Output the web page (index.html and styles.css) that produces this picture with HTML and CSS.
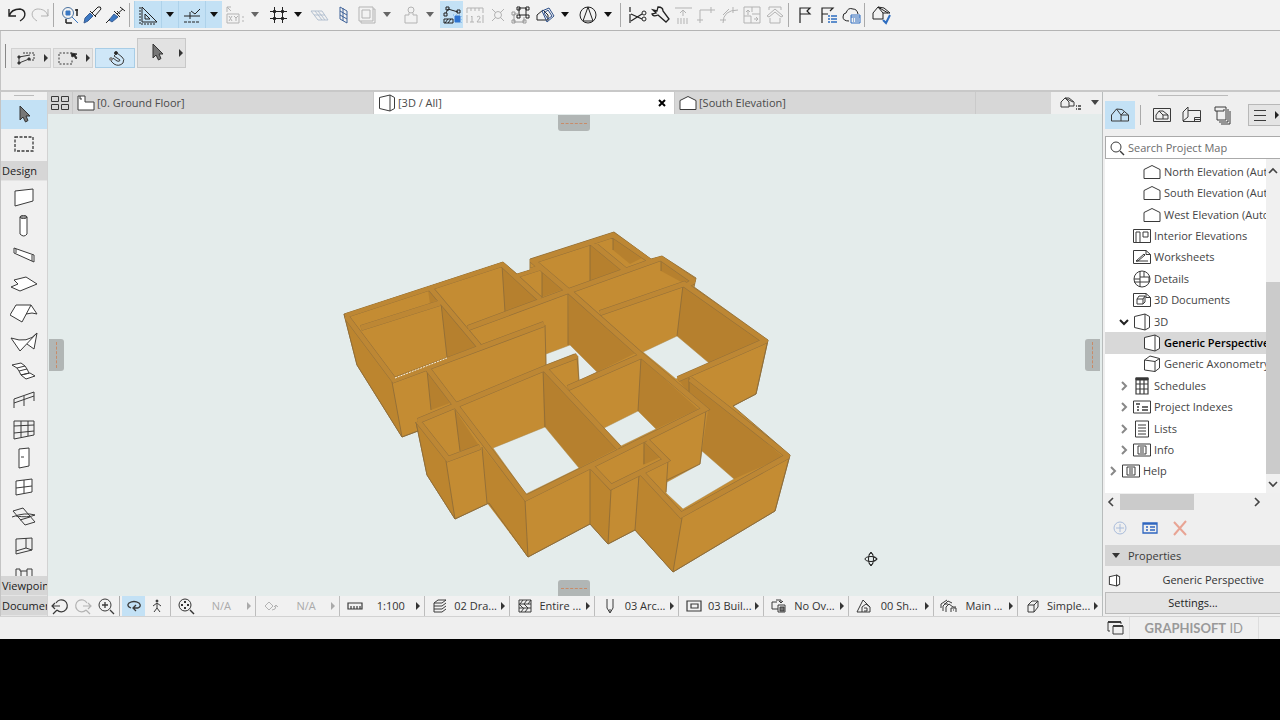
FILE: index.html
```
<!DOCTYPE html>
<html lang="en">
<head>
<meta charset="utf-8">
<title>Project - 3D / All</title>
<link rel="stylesheet" href="styles.css">
</head>
<body>
<svg class="defs" aria-hidden="true">
  <symbol id="caret" viewBox="0 0 10 6"><path d="M1 0h8L5 5z" fill="currentColor" stroke="none"/></symbol>
  <symbol id="play" viewBox="0 0 6 8"><path d="M1 0l4 4-4 4z" fill="currentColor" stroke="none"/></symbol>
  <symbol id="pointer" viewBox="-11 -11 22 22"><path d="M-4-9V5l3-3 2.500 5 2.500-1.500L2 1h4z" fill="#777" stroke="#333"/></symbol>
  <symbol id="elev" viewBox="-11 -11 22 22"><path d="M-8 6.500V-2.500L0-6.500 8-2.500V6.500z" fill="#fff"/></symbol>
  <symbol id="persp" viewBox="-11 -11 22 22"><path d="M-7.500-5.500L3-8V8L-7.500 5.500zM3-8l4.500 2.500v11L3 8" fill="#fff"/></symbol>
  <symbol id="house" viewBox="-11 -11 22 22"><path d="M-8.500 6V0l5-6L1 0v6zM-3.500-6L2-5.500 8.500 0M1 0h7.500v6H1M1 0l3-3"/></symbol>
  <symbol id="infobox" viewBox="-11 -11 22 22"><path d="M-8.500-6h17V6h-17zM-4-4h8v8h-8zM-2-2h4M-2 0h4M-2 2h4"/></symbol>
  <symbol id="chev" viewBox="0 0 10 10"><path d="M3 1l4 4-4 4" stroke-width="2"/></symbol>
</svg>

<div class="app">
  <header class="toolbar" role="toolbar" aria-label="Standard">
    <button class="tb" aria-label="Undo"><svg class="i" viewBox="-11 -11 22 22"><path d="M-8-6v7h7M-8 1C-6-5-2-6 3-6 9-5 10 2 3 6" stroke-width="1.400"/></svg></button>
    <button class="tb dim" aria-label="Redo"><svg class="i" viewBox="-11 -11 22 22"><path d="M8-6v7H1M8 1C6-5 2-6-3-6-9-5-10 2-3 6"/></svg></button>
    <span class="sep"></span>
    <button class="tb" aria-label="Find and select"><svg class="i" viewBox="-11 -11 22 22"><circle cx="-2" cy="-2" r="5.500" stroke="#49719f"/><path d="M-4-4h4v4h-4z" fill="#3b78c3" stroke="#3b78c3"/><path d="M2 2l6 6" stroke="#3b78c3"/><path d="M5-5h3M7-6v7M-4 8h6M-4 4v4" stroke-width="1.500"/></svg></button>
    <button class="tb" aria-label="Pick up parameters"><svg class="i" viewBox="-11 -11 22 22"><path d="M-9 8l1-5 5-5 3 3-5 5z" fill="#3b78c3" stroke="#3b5f94"/><path d="M-3-4l6 6M-1-2l6-6q3-1 3 2L2 1"/></svg></button>
    <button class="tb" aria-label="Inject parameters"><svg class="i" viewBox="-11 -11 22 22"><path d="M-7 5l5-6 4 3-6 5z" fill="#3b78c3" stroke="#3b5f94"/><path d="M-10 8l4-4M-2-4l6 6M1-1l6-5M4-8l5 4M1-4l3 3"/></svg></button>
    <span class="sep"></span>
    <span class="toggles">
      <button class="tb on" aria-label="Guide lines"><svg class="i" viewBox="-11 -11 22 22"><path d="M-6-8L9 7H-6zM-3-1l5 5h-5z"/><path d="M-8-8V9H8" stroke-dasharray="2 1"/></svg></button><button class="car on" aria-label="Guide line options"><svg class="c"><use href="#caret"/></svg></button><button class="tb on" aria-label="Snap guides"><svg class="i" viewBox="-11 -11 22 22"><path d="M-8 1H8M-2-3v7M-1-4l4 3 5-5"/><path d="M-8 7H7" stroke-dasharray="3 1"/></svg></button><button class="car on" aria-label="Snap guide options"><svg class="c"><use href="#caret"/></svg></button>
    </span>
    <span class="split"><button class="tb dim" aria-label="Coordinates"><svg class="i" viewBox="-11 -11 22 22"><path d="M-8-1H4V8H-8zM-8-3v-5h4M-8-8l4 4M-6 1l3 5M-3 1l-3 5M-1 1l2 2 2-2M1 3v3M7 2h2M7 6h2"/></svg></button><button class="car mid" aria-label="Coordinate options"><svg class="c"><use href="#caret"/></svg></button></span>
    <span class="split"><button class="tb" aria-label="Grid snap"><svg class="i" viewBox="-11 -11 22 22"><path d="M-8-3.500H9M-8 3.500H9M-3.500-8V8M4.500-8V8"/><path d="M-4.500-4.500h2v2h-2zM3.500-4.500h2v2h-2zM-4.500 2.500h2v2h-2zM3.500 2.500h2v2h-2z" fill="#222"/></svg></button><button class="car" aria-label="Grid options"><svg class="c"><use href="#caret"/></svg></button></span>
    <button class="tb pale" aria-label="Skewed grid"><svg class="i" viewBox="-11 -11 22 22"><path d="M-9-4H2L8 5H-2zM-6 0H5M-5-4l7 9M-2-4l7 9"/></svg></button>
    <button class="tb blue" aria-label="Editing plane"><svg class="i" viewBox="-11 -11 22 22"><path d="M-3-8L4-4V8L-3 4zM0-7V6M-3-4l7 4M-3 0l7 4"/></svg></button>
    <span class="split"><button class="tb dim" aria-label="Layers"><svg class="i" viewBox="-11 -11 22 22"><path d="M-8-8H6V6H-8zM-5-5h8v8h-8zM6-6h2V8H-6V6"/></svg></button><button class="car mid" aria-label="Layer options"><svg class="c"><use href="#caret"/></svg></button></span>
    <span class="split"><button class="tb dim" aria-label="Gravity"><svg class="i" viewBox="-11 -11 22 22"><circle cx="1" cy="-5" r="3"/><path d="M-1-2v2h-4V8H7V0H3v-2"/></svg></button><button class="car mid" aria-label="Gravity options"><svg class="c"><use href="#caret"/></svg></button></span>
    <button class="tb on" aria-label="Suspend groups"><svg class="i" viewBox="-11 -11 22 22"><path d="M-6-2L-4-6 6-3M-8-2h3v3h-3zM-6-8h3v3h-3zM5-5h3v3H5zM-8 4h9v4h-9zM-7 8l3-4M-4 8l3-4"/><path d="M3 1h5v6H3z" fill="#2e74d0" stroke="#2e74d0"/><path d="M1 0H9V8" stroke="#6aa7e8" stroke-dasharray="1 2"/></svg></button>
    <button class="tb dim" aria-label="Ruler"><svg class="i" viewBox="-11 -11 22 22"><path d="M-8-2v-5H8v5M-4-7v3M0-7v3M4-7v3M-4 2l1-1v6M-5 7h4M2 2q3-2 3 1L2 7h4M-8 0V8M8 0V8"/></svg></button>
    <button class="tb dim" aria-label="Intersection"><svg class="i" viewBox="-11 -11 22 22"><circle r="3.500"/><path d="M-6-6l4 4M6-6L2-2M-6 6l4-4M6 6L2 2"/></svg></button>
    <button class="tb grey" aria-label="Group"><svg class="i" viewBox="-11 -11 22 22"><path d="M-2-7h7v7h-7zM-4-8h3v3h-3zM5-8h3v3H5zM-4 0h3v3h-3zM5 0h3v3H5z" stroke="#222"/><path d="M-2-1h-5v8H3V2M-9-3h3v3h-3zM-9 5h3v3h-3zM2 5h3v3H2z"/></svg></button>
    <span class="split"><button class="tb" aria-label="Trace"><svg class="i" viewBox="-11 -11 22 22"><path d="M-8 5v-5l6-5 5 5v5z"/><path d="M-3-4l7-3 5 8-7 6zM-1-2l4-3 4 6-4 3z" stroke="#2c4e88"/></svg></button><button class="car" aria-label="Trace options"><svg class="c"><use href="#caret"/></svg></button></span>
    <span class="split"><button class="tb" aria-label="North"><svg class="i" viewBox="-11 -11 22 22"><circle r="8"/><path d="M0-8l5 14H-5z"/></svg></button><button class="car" aria-label="North options"><svg class="c"><use href="#caret"/></svg></button></span>
    <span class="sep"></span>
    <button class="tb" aria-label="Split"><svg class="i" viewBox="-11 -11 22 22"><path d="M-7-8v5M-7-1V8M-6-1L5 4M-6 6L5-1" stroke-width="1.200"/><circle cx="7" cy="-2" r="2"/><circle cx="7" cy="4" r="2"/></svg></button>
    <button class="tb" aria-label="Adjust"><svg class="i" viewBox="-11 -11 22 22"><path d="M-7-5l4 1 1-4q5 0 5 4l6 8-3 3-8-7q-5 2-6-1l4-1z" stroke-width="1.300"/></svg></button>
    <button class="tb dim" aria-label="Elevate"><svg class="i" viewBox="-11 -11 22 22"><path d="M-8-7H9M0-5V1M-3-2l3-3 3 3M-5 3v6M-2 3v6M1 3v6M4 3v6"/></svg></button>
    <button class="tb dim" aria-label="Intersect"><svg class="i" viewBox="-11 -11 22 22"><path d="M-6 8V-5H9M-9 5h6M5-8v6"/></svg></button>
    <button class="tb dim" aria-label="Fillet"><svg class="i" viewBox="-11 -11 22 22"><path d="M-6 8Q-6-5 9-5M-9 5h6M4-8v6M-6 0l6-6"/></svg></button>
    <button class="tb dim" aria-label="Resize"><svg class="i" viewBox="-11 -11 22 22"><path d="M-8-8H8V8H-8zM-8 1h7v7M-4-5V0M-6-3l2-2 2 2M0-8v5M0-1h8M2 4h4M4 2l2 2-2 2"/></svg></button>
    <button class="tb dim" aria-label="Roof trim"><svg class="i" viewBox="-11 -11 22 22"><path d="M-8 1L0-6 8 1l-2 1-6-5-6 5zM-5 3v5H5V3M-6-5v-3H6v3"/></svg></button>
    <span class="sep"></span>
    <button class="tb" aria-label="Issue flag"><svg class="i" viewBox="-11 -11 22 22"><path d="M-5 8V-7H5L2-4l3 3H-5" stroke-width="1.200"/></svg></button>
    <button class="tb" aria-label="Issue list"><svg class="i" viewBox="-11 -11 22 22"><path d="M-6 8V-7H5L2-4M-6-1h6" stroke-width="1.200"/><path d="M0 1h2M0 4h2M0 7h2M3 1h6M3 4h6M3 7h6" stroke="#2e6dc0" stroke-width="1.600"/></svg></button>
    <button class="tb" aria-label="Cloud issues"><svg class="i" viewBox="-11 -11 22 22"><path d="M-2 6q-6 0-6-4 0-4 3-4 2-6 7-4 4 0 5 5"/><path d="M0 0h9v8H0zM0 2h9M2 4h1M2 6h1M4 4h4M4 6h4" stroke="#2e6dc0"/></svg></button>
    <span class="sep"></span>
    <button class="tb" aria-label="Model check"><svg class="i" viewBox="-11 -11 22 22"><path d="M-8 4v-6l5-6 5 6v6zM-3-8l6 1 6 5-7 0M-3-8l10 6"/><path d="M2 5l3 3 4-8" stroke="#2e6dc0" stroke-width="2"/></svg></button>
  </header>

  <section class="infobar" aria-label="Info box">
    <span class="grip"></span>
    <button class="opt" aria-label="Selection method"><svg class="i" viewBox="-11 -11 22 22"><path d="M-7-1L4-3M-7-1V5L3 1" /><path d="M-8-2h2v2h-2zM-8 4h2v2h-2zM2 0h2v2H2z" fill="#222"/><path d="M-3-5H8V2H4" stroke-dasharray="2 1"/></svg><svg class="p"><use href="#play"/></svg></button>
    <button class="opt" aria-label="Marquee method"><svg class="i" viewBox="-11 -11 22 22"><path d="M4-5H-9V6H4V2" stroke-dasharray="2 1.500"/><path d="M3-5l6 1-2 1 2 3-1 1-2-3-2 1z" fill="#222"/></svg><svg class="p"><use href="#play"/></svg></button>
    <button class="opt on" aria-label="Magnet"><svg class="i" viewBox="-11 -11 22 22"><path d="M-5 3l3 3q5 3 9-1 2-4-1-6L1-5-2-2 4 2q0 2-3 1L-3 0z"/><circle cx="-5" cy="1" r="1.500" fill="#888" stroke="#888"/><circle cx="0" cy="-5" r="1.500" fill="#222"/></svg></button>
    <button class="opt big" aria-label="Arrow tool"><svg class="i"><use href="#pointer"/></svg><svg class="p"><use href="#play"/></svg></button>
  </section>

  <div class="workspace">
    <nav class="toolbox" aria-label="Toolbox">
      <span class="hgrip"></span>
      <button class="tool on" aria-label="Arrow"><svg class="i"><use href="#pointer"/></svg></button>
      <button class="tool" aria-label="Marquee"><svg class="i" viewBox="-11 -11 22 22"><path d="M-9-7H9V7H-9z" stroke-dasharray="3 1.500" stroke-width="1.300"/></svg></button>
      <button class="group first">Design</button>
      <div class="tools">
        <button class="tool" aria-label="Wall"><svg class="i" viewBox="-11 -11 22 22"><path d="M-9-6L9-8V4L-9 9z" fill="#fff"/></svg></button>
        <button class="tool" aria-label="Column"><svg class="i" viewBox="-11 -11 22 22"><path d="M-4-9V8q4 4 7 0V-9z" fill="#fff"/><ellipse cx="-.5" cy="-9" rx="3.500" ry="1.500"/></svg></button>
        <button class="tool" aria-label="Beam"><svg class="i" viewBox="-11 -11 22 22"><path d="M-10-7L10 0V7L-10-2zM-8-6v4M8 0v6" fill="#fff"/></svg></button>
        <button class="tool wide" aria-label="Slab"><svg class="i" viewBox="-14 -11 28 22"><path d="M-10-4L2-7 13 0-4 7-13 3-6 0z" fill="#fff"/></svg></button>
        <button class="tool wide" aria-label="Roof"><svg class="i" viewBox="-14 -11 28 22"><path d="M-8-8H7L-2 9-14 2zM7-8l6 9-5-1-6 1" fill="#fff"/></svg></button>
        <button class="tool wide" aria-label="Shell"><svg class="i" viewBox="-14 -11 28 22"><path d="M-13-4Q4 2 13-9L-4 9zM13-9l-3 16-7-5" fill="#fff"/></svg></button>
        <button class="tool wide" aria-label="Stair"><svg class="i" viewBox="-14 -11 28 22"><path d="M-12-6l9-2 4 3-8 2zM-7-3l2 3 8-2-2-3M-5 0l2 4 8-2-2-4M-3 4L2 8 11 5 6 2z" fill="#fff"/></svg></button>
        <button class="tool" aria-label="Railing"><svg class="i" viewBox="-11 -11 22 22"><path d="M-10 8V-1L10-8V1M-10 3L10-4M0-4V6"/></svg></button>
        <button class="tool" aria-label="Curtain wall"><svg class="i" viewBox="-11 -11 22 22"><path d="M-10-8H10V6L-10 10zM-3-8V8M4-8V7M-10-3L10-4M-10 4L10 2"/></svg></button>
        <button class="tool" aria-label="Door"><svg class="i" viewBox="-11 -11 22 22"><path d="M-5-9L5-10V8L-5 10zM-3-1h3" fill="#fff"/></svg></button>
        <button class="tool" aria-label="Window"><svg class="i" viewBox="-11 -11 22 22"><path d="M-8-6L8-8V5L-8 8zM0-7V6M-8 1L8-1" fill="#fff"/></svg></button>
        <button class="tool wide" aria-label="Skylight"><svg class="i" viewBox="-14 -11 28 22"><path d="M-11-5L-1-8 11 6 1 9zM-12 1Q1-4 11-1M-8 0Q4 2 11-1M-4 4l10-3"/></svg></button>
        <button class="tool" aria-label="Opening"><svg class="i" viewBox="-11 -11 22 22"><path d="M-8-6L8-7V5L-8 9zM2-7V3l6 2M2 3L-8 6"/></svg></button>
        <button class="tool" aria-label="Object"><svg class="i" viewBox="-11 -11 22 22"><path d="M-8 9V-5h4v2h7v-2h5V9M-3-3V9M3-3V9"/></svg></button>
      </div>
      <button class="group">Viewpoint</button>
      <button class="group">Document</button>
    </nav>

    <main class="center">
      <div class="tabs" role="tablist">
        <button class="overview" aria-label="Tab overview"><svg class="i" viewBox="-11 -11 22 22"><path d="M-8.500-6.500h7v5h-7zM1.500-6.500h7v5h-7zM-8.500 1.500h7v5h-7zM1.500 1.500h7v5h-7z"/></svg></button>
        <button class="tab" role="tab"><svg class="i" viewBox="-11 -11 22 22"><path d="M-8-7h7v6h9v8H-8zM-6-7v3h2" fill="#fff"/></svg>[0. Ground Floor]</button>
        <div class="tab active"><button role="tab"><svg class="i"><use href="#persp"/></svg>[3D / All]</button><button class="close" aria-label="Close tab"><svg viewBox="0 0 8 8"><path d="M1 1l6 6M7 1L1 7" stroke-width="2"/></svg></button></div>
        <button class="tab" role="tab"><svg class="i"><use href="#elev"/></svg>[South Elevation]</button>
        <span class="rest"></span>
        <button class="viewmenu" aria-label="View options"><svg class="i" viewBox="-11 -11 22 22"><path d="M-10 4v-5l4-4 4 4v5zM-6-5h4l5 4v4h-5M-6-5l8 4"/><path d="M5 3h1M7 3h3M5 6h1M7 6h3" stroke-width="1.500"/></svg><svg class="c"><use href="#caret"/></svg></button>
      </div>

      <div class="viewport">
        <svg class="scene" viewBox="48 114 1054 482" role="img" aria-label="3D model of ground floor walls">
          <defs>
            <path id="mass" d="M344 314L503 262 517 274 530 270V259L614 232 651 259 662 256 696 278 694 287 768 340 756 394 733 406 790 455 775 511 673 572 635 530 608 544 590 524 528 557 489 503 455 519 427 475 416 422 418 431 402 437 357 365z"/>
            <clipPath id="within"><use href="#mass"/></clipPath>
          </defs>
          <use class="lit" href="#mass"/>
          <g class="shade">
            <path d="M441 303L477 346 447 357z"/><path d="M428 290L437 300 430 304z"/><path d="M502 265L538 300 505 312z"/><path d="M542 268L564 289 542 297z"/>
            <path d="M590 241L624 270 590 283z"/><path d="M613 235L642 258 630 264 613 250z"/><path d="M661 258L694 281 685 284 661 271z"/>
            <path d="M569 292L638 352 597 372 568 345z"/><path d="M683 284L763 342 709 363 677 336z"/>
            <path d="M427 370L450 403 431 410z"/><path d="M455 410L480 447 460 451z"/><path d="M543 370L618 448 579 468 544 427z"/>
            <path d="M641 358L698 409 656 429 638 411z"/><path d="M689 378L783 457 734 479 702 451 708 410 689 394z"/>
            <path d="M644 442L661 457 643 465z"/><path d="M678 379L690 377 689 394z"/>
          </g>
          <g class="side">
            <path d="M344 314L357 365 402 437 392 382z"/><path d="M416 422L427 475 455 519 446 461z"/><path d="M482 447L525 500 528 557 487 503z"/>
            <path d="M590 470L611 490 609 544 590 523z"/><path d="M639 473L682 518 673 572 635 530z"/>
          </g>
          <g class="open">
            <path d="M493 448L545 427 579 468 526 494z"/><path d="M604 428L638 411 656 429 621 446z"/><path d="M643 352L677 336 709 363 676 379z"/>
            <path d="M546 354L570 345 597 372 579 381 578 356 574 354 546 365z"/><path d="M702 451L734 479 683 509 666 493 667 482 700 464z"/>
          </g>
          <g class="edge">
            <path d="M344 314L357 365 402 437M392 382L402 437 418 431M416 422L427 475 455 519 446 461M455 519L489 503 528 557 525 500M528 557L590 524 608 544 611 490M608 544L635 530 673 572 682 518M673 572L775 511 790 455M768 340L756 394 733 406M639 475L635 530M590 470V524M482 447L487 503M545 325L546 365M577 357L579 381M706 410L700 464 667 480M668 460L666 492M641 358L638 411M543 370L545 427M568 292V345M683 285L677 336M441 303L447 357M502 265L505 312M542 268V297M590 241V283M613 235V250M661 258V271M427 370L431 410M455 410L460 451M644 442V464M689 378V394"/>
          </g>
          <g clip-path="url(#within)">
            <g class="cap-edge"><use href="#caps"/></g>
            <g class="cap"><path id="caps" d="M346 316L394 380 544 324M346 315L502 264 540 299M431 289L479 346M361 328L440 303M468 328L568 291 533 261 613 235 651 261M517 275L542 267M591 242L625 270M569 291L661 258 694 281 686 286M600 313L684 284 765 341 678 379M569 291L641 355 705 409 526 498 428 369M418 421L543 369 577 356M545 369L619 448M568 388L641 356M418 421L448 459 480 447M592 467L611 487 666 460 647 441M641 472L681 515 788 456 690 379"/></g>
          </g>
          <path d="M395 378L447 358" stroke="#f4f1e4" stroke-dasharray="2 1"/>
          <g class="cursor"><ellipse cx="871" cy="559" rx="6" ry="2.500"/><ellipse cx="871" cy="559" rx="2.500" ry="6"/><path d="M869 555l2-3 2 3M869 563l2 3 2-3M874 557l3 2-3 2"/></g>
        </svg>
        <button class="handle top" aria-label="Expand top"></button>
        <button class="handle bottom" aria-label="Expand bottom"></button>
        <button class="handle left" aria-label="Expand left"></button>
        <button class="handle right" aria-label="Expand right"></button>
      </div>

      <div class="quickbar" role="toolbar" aria-label="Quick options">
        <div class="nav">
          <button aria-label="Previous view"><svg class="i" viewBox="-11 -11 22 22"><path d="M-4-3a6 6 0 1 1 1 7M-8 0h8M-5-3l-3 3 3 3M-3 4l-4 4" stroke-width="1.200"/></svg></button>
          <button class="dim" aria-label="Next view"><svg class="i" viewBox="-11 -11 22 22"><path d="M4-3a6 6 0 1 0-1 7M8 0H0M5-3l3 3-3 3M3 4l4 4" stroke-width="1.200"/></svg></button>
          <button aria-label="Zoom in"><svg class="i" viewBox="-11 -11 22 22"><circle cx="-1" cy="-1" r="6"/><path d="M-4-1h6M-1-4v6M4 4l4 4" stroke-width="1.300"/></svg></button>
          <span class="sep"></span>
          <button class="on" aria-label="Orbit"><svg class="i" viewBox="-11 -11 22 22"><path d="M-3 2Q-8 0-5-3 0-6 5-3 8 0 4 2L-1 2M2-1l-3 3 3 3" stroke-width="1.300"/></svg></button>
          <button aria-label="Walk"><svg class="i" viewBox="-11 -11 22 22"><circle cx="0" cy="-5" r="1" fill="#222"/><path d="M0-3V2l3 4M0 2l-3 4M-4 0l4-3 4 3"/></svg></button>
        </div>
        <button class="q dim"><svg class="i dark" viewBox="-11 -11 22 22"><circle cx="-1" cy="-1" r="6"/><path d="M-2-5h2v2h-2zM-2 1h2v2h-2zM-5-2h2v2h-2zM1-2h2v2H1z" fill="#333" stroke="none"/><path d="M4 4l4 4" stroke-width="1.400"/></svg><span>N/A</span><svg class="p"><use href="#play"/></svg></button>
        <button class="q dim"><svg class="i" viewBox="-11 -11 22 22"><path d="M-6 0l4-4 4 4-4 4zM1 4q4 0 4-4M3 1l2-2 2 2"/></svg><span>N/A</span><svg class="p"><use href="#play"/></svg></button>
        <button class="q"><svg class="i" viewBox="-11 -11 22 22"><path d="M-7-3H7V3H-7zM-4 3V0M-1 3V0M2 3V0M5 3V0" stroke-width="1.200"/></svg><span>1:100</span><svg class="p"><use href="#play"/></svg></button>
        <button class="q"><svg class="i" viewBox="-11 -11 22 22"><path d="M-2-6h8L2-3h-8zM-6 0h8l4-3M-6 3h8l4-3M-6 6h8l4-3M-6-3v9"/></svg><span>02 Dra...</span><svg class="p"><use href="#play"/></svg></button>
        <button class="q"><svg class="i" viewBox="-11 -11 22 22"><path d="M-6-6H6V6H-6zM-6-2H6M-6 2H6M-5-2l3-4M-1-2l3-4M3-2l3-4M-6-2l4 4M-1-2l4 4M-4 6l3-4M0 6l3-4"/></svg><span>Entire ...</span><svg class="p"><use href="#play"/></svg></button>
        <button class="q"><svg class="i" viewBox="-11 -11 22 22"><path d="M-3-7V2L0 7 3 2V-7M0 3v3"/></svg><span>03 Arc...</span><svg class="p"><use href="#play"/></svg></button>
        <button class="q"><svg class="i" viewBox="-11 -11 22 22"><path d="M-7-5H7V5H-7zM-3-2h7v4h-7z" stroke-width="1.200"/></svg><span>03 Buil...</span><svg class="p"><use href="#play"/></svg></button>
        <button class="q"><svg class="i" viewBox="-11 -11 22 22"><path d="M-1 3h-6v-7h5M-3-6h5v3M0-5l2 2 2-2M-1-1h7v7h-7z"/><path d="M1 1h4v4H1z" fill="#777"/></svg><span>No Ov...</span><svg class="p"><use href="#play"/></svg></button>
        <button class="q"><svg class="i" viewBox="-11 -11 22 22"><path d="M-7 6L-1-6 6 1M-7 6H6V1L2-2-2 1v5M0 2h3v3H0"/></svg><span>00 Sh...</span><svg class="p"><use href="#play"/></svg></button>
        <button class="q"><svg class="i" viewBox="-11 -11 22 22"><path d="M-6 5V0l5-5 4 2M-8 2v-4l6-4M-3 6V1l3-3 4 3h3M2 6V2h5v4M4 4h1M-5-2h4"/></svg><span>Main ...</span><svg class="p"><use href="#play"/></svg></button>
        <button class="q"><svg class="i" viewBox="-11 -11 22 22"><path d="M-5-1l4-4h6v6l-4 5h-6zM-5-1h6v7M1-1l4-4"/></svg><span>Simple...</span><svg class="p"><use href="#play"/></svg></button>
      </div>
    </main>

    <aside class="navigator">
      <span class="hgrip"></span>
      <div class="maps">
        <button class="map on" aria-label="Project map"><svg class="i"><use href="#house"/></svg></button>
        <span class="sep"></span>
        <button class="map" aria-label="View map"><svg class="i" viewBox="-11 -11 22 22"><path d="M-8.500-6.500h17v13h-17zM-6 4V0l3-4 4 4v4zM-3-4h4l5 4v4H1M1 0h5"/></svg></button>
        <button class="map" aria-label="Layout book"><svg class="i" viewBox="-11 -11 22 22"><path d="M-9-3l5-5V2l-5 4zM-4-4.500H8.500v11H-9M2.500 6.500v-4h6M2.500 4.500h6"/></svg></button>
        <button class="map" aria-label="Publisher sets"><svg class="i" viewBox="-11 -11 22 22"><path d="M-5-4V5H4V-8H-7v4H2V-6M6-6V7H-3M8-4V9H-1"/></svg></button>
        <button class="menu" aria-label="Navigator menu"><svg viewBox="0 0 30 12"><path d="M4 1.500h12M4 6.500h12M4 11.500h12"/><path d="M25 2l4 4-4 4z" fill="#222" stroke="none"/></svg></button>
      </div>
      <label class="search"><svg class="i" viewBox="-11 -11 22 22"><circle cx="-1" cy="-1" r="5"/><path d="M3 3l4 4" stroke-width="1.400"/></svg><input type="text" placeholder="Search Project Map" aria-label="Search Project Map"></label>
      <div class="treebox">
        <ul class="tree">
          <li class="l3"><svg class="i"><use href="#elev"/></svg>North Elevation (Auto-rebuild)</li>
          <li class="l3"><svg class="i"><use href="#elev"/></svg>South Elevation (Auto-rebuild)</li>
          <li class="l3"><svg class="i"><use href="#elev"/></svg>West Elevation (Auto-rebuild)</li>
          <li class="l2"><svg class="i" viewBox="-11 -11 22 22"><path d="M-8.500-6.500h17v13h-17zM-6 6.500V-4h4V6.500M1-4h5v5H1z"/></svg>Interior Elevations</li>
          <li class="l2"><svg class="i" viewBox="-11 -11 22 22"><path d="M-8.500-6.500H4l4.500 4v9h-17zM4-6.500v4h4.500M-6 4l8-7 1 1-7 6zM-6 4H6"/></svg>Worksheets</li>
          <li class="l2"><svg class="i" viewBox="-11 -11 22 22"><circle r="8"/><path d="M-2-8V8M-8 0h6M-2-2h9v5h-9M2-7v5M-8 3h6"/></svg>Details</li>
          <li class="l2"><svg class="i" viewBox="-11 -11 22 22"><path d="M-8.500-6.500H4l4.500 4v9h-17zM4-6.500v4h4.500M-5-1l2-3h6v6L1 4h-6zM-5-1h6v5M1-1l2-3"/></svg>3D Documents</li>
          <li class="l2"><svg class="v open-v" viewBox="0 0 10 10"><path d="M1 3l4 4 4-4" stroke-width="2"/></svg><svg class="i"><use href="#persp"/></svg>3D</li>
          <li class="l3 sel"><svg class="i"><use href="#persp"/></svg>Generic Perspective</li>
          <li class="l3"><svg class="i" viewBox="-11 -11 22 22"><path d="M-7.500-4L-2-8 7.500-5.500V4L3 7.500-7.500 6zM-7.500-4L3-2.500V7.500M3-2.500l4.500-3" fill="#fff"/></svg>Generic Axonometry</li>
          <li class="l2"><svg class="v"><use href="#chev"/></svg><svg class="i" viewBox="-11 -11 22 22"><path d="M-6-8H6V8H-6zM-2-8V8M2-8V8M-6-2H6M-6 3H6" stroke-width="1.200"/><path d="M-6-8H6v2H-6z" fill="#333"/></svg>Schedules</li>
          <li class="l2"><svg class="v"><use href="#chev"/></svg><svg class="i" viewBox="-11 -11 22 22"><path d="M-8.500-6h17V6h-17z"/><path d="M-6-3h4M-5 0h2M-5 3h2M0 0h6M0 3h6" stroke-width="1.600"/></svg>Project Indexes</li>
          <li class="l2"><svg class="v"><use href="#chev"/></svg><svg class="i" viewBox="-11 -11 22 22"><path d="M-6.500-8h13V8h-13zM-4-4h8M-4-1h8M-4 2h8M-4 5h8"/></svg>Lists</li>
          <li class="l2"><svg class="v"><use href="#chev"/></svg><svg class="i"><use href="#infobox"/></svg>Info</li>
          <li class="l1"><svg class="v"><use href="#chev"/></svg><svg class="i"><use href="#infobox"/></svg>Help</li>
        </ul>
        <div class="vscroll"><svg viewBox="0 0 10 10"><path d="M1 7l4-4 4 4"/></svg><span class="vthumb"></span><svg viewBox="0 0 10 10"><path d="M1 3l4 4 4-4"/></svg></div>
      </div>
      <div class="hscroll"><svg viewBox="0 0 10 10"><path d="M7 1L3 5l4 4"/></svg><span class="hthumb"></span><svg viewBox="0 0 10 10"><path d="M3 1l4 4-4 4"/></svg></div>
      <div class="actions">
        <button aria-label="New viewpoint"><svg class="i" viewBox="-11 -11 22 22"><g stroke="#a9bcdb"><circle r="6"/><path d="M-4 0h8M0-4v8"/></g></svg></button>
        <button aria-label="Viewpoint settings"><svg class="i" viewBox="-11 -11 22 22"><path d="M-7-5H7V5H-7zM-4-1h2M-4 2h2M0-1h5M0 2h5M-7-4H7" stroke="#2f66c0" stroke-width="1.300"/></svg></button>
        <button aria-label="Delete"><svg class="i" viewBox="-11 -11 22 22"><path d="M-6-6L6 7M6-7L-6 7" stroke="#e8a494" stroke-width="2"/></svg></button>
      </div>
      <button class="props"><svg class="c"><use href="#caret"/></svg>Properties</button>
      <div class="current"><svg class="small"><use href="#persp"/></svg><span>Generic Perspective</span></div>
      <button class="settings">Settings...</button>
    </aside>
  </div>

  <footer class="status">
    <button class="windows" aria-label="Windows"><svg class="i" viewBox="-11 -11 22 22"><path d="M-3-2H7V6H-3zM-6 3h-2v-9H5v2"/><path d="M-8-6H5M-3-2H7" stroke-width="2"/></svg></button>
    <a class="brand" href="#"><b>GRAPHISOFT</b> ID</a>
    <span class="tail"></span>
  </footer>
</div>
</body>
</html>
```
FILE: styles.css
```
* { box-sizing: border-box; }
body {
  margin: 0;
  height: 100vh;
  padding-bottom: 81px;
  background: #000;
  color: #3a3a3a;
  font: 11px/16px "Open Sans", "Noto Sans", sans-serif;
  overflow: hidden;
}
button {
  margin: 0;
  padding: 0;
  border: 0;
  background: none;
  color: inherit;
  font: inherit;
  display: flex;
  align-items: center;
  justify-content: center;
  white-space: nowrap;
}
svg { fill: none; stroke: #3a3a3a; flex: none; display: block; }
.defs { position: absolute; width: 0; height: 0; }
.i { width: 22px; height: 22px; }
.c { width: 10px; height: 6px; color: #111; }
.p { width: 6px; height: 8px; color: #333; }
.on { background: #c3e1f5; }
.dim svg { stroke: #b3b3b3; }

.app { height: 100%; display: flex; flex-direction: column; background: #efefef; }

.toolbar {
  flex: none;
  height: 31px;
  padding: 0 5px 1px;
  display: flex;
  align-items: center;
  background: #f2f2f2;
  border-bottom: 1px solid #b4b4b4;
}
.tb { width: 23px; height: 27px; flex: none; }
.tb svg { stroke: #222; }
.tb.dim svg { stroke: #b3b3b3; }
.tb.pale svg { stroke: #b3c0d0; }
.tb.blue svg { stroke: #3f6299; }
.tb.grey svg { stroke: #999; }
.car { width: 18px; height: 27px; }
.car.mid .c { color: #666; }
.toggles { display: flex; }
.toggles .tb { width: 27px; border-left: 1px solid #aed2ea; }
.toggles .car { width: 17px; border-left: 1px solid #aed2ea; }
.split { display: flex; margin: 0 1px; }
.sep { flex: none; width: 7px; height: 24px; background: linear-gradient(#aaa, #aaa) 2px 0 / 1px 100% no-repeat; }

.infobar {
  flex: none;
  height: 61px;
  padding: 8px 4px 22px;
  display: flex;
  align-items: flex-end;
  gap: 2px;
  border-left: 1px solid #c4c4c4;
  border-bottom: 2px solid #c8c8c8;
}
.grip { width: 1px; height: 24px; margin-right: 3px; background: #888; }
.opt { width: 40px; height: 20px; padding-left: 2px; background: #e6e6e6; border: 1px solid #d2d2d2; }
.opt .p { margin-left: 6px; }
.opt.on { background: #cfe7f8; border-color: #a8cde6; }
.opt.big { width: 49px; height: 30px; background: #e2e2e2; border-color: #c8c8c8; padding-left: 6px; }
.opt.big .p { margin-left: 10px; }

.workspace { flex: 1; min-height: 0; display: flex; }
.toolbox {
  width: 48px;
  flex: none;
  display: flex;
  flex-direction: column;
  border-left: 1px solid #c4c4c4;
  border-right: 1px solid #d2d2d2;
  background: #f0f0f0;
  overflow: hidden;
}
.hgrip { flex: none; width: 20px; height: 1px; margin: 3px auto 4px; background: #bbb; }
.tool { width: 100%; height: 29px; flex: none; }
.wide .i { width: 28px; }
.group {
  flex: none;
  height: 20px;
  width: 46px;
  padding-left: 1px;
  justify-content: flex-start;
  background: #d6d6d6;
  border-bottom: 1px solid #e4e4e4;
  color: #222;
  overflow: hidden;
}
.group.first { margin: 3px 0 1px; }
.tools { flex: 1; min-height: 0; overflow: hidden; display: flex; flex-direction: column; }

.center { flex: 1; min-width: 0; display: flex; flex-direction: column; }
.tabs { flex: none; height: 22px; display: flex; background: #d7d7d7; }
.overview { width: 25px; border-right: 1px solid #c8c8c8; }
.tab { flex: 0 1 301px; display: flex; align-items: center; justify-content: flex-start; color: #4a4a4a; border-right: 1px solid #cacaca; }
.tab .i { margin-left: 2px; }
.tab.active { background: #fff; justify-content: space-between; }
.close { width: 24px; height: 20px; }
.close svg { width: 8px; height: 8px; stroke: #000; }
.rest { flex: 1; }
.viewmenu { width: 51px; padding-left: 6px; background: #efefef; gap: 8px; }
.viewmenu .c { color: #444; }
.viewport { position: relative; flex: 1; min-height: 0; background: #e4eceb; overflow: hidden; }
.scene { width: 100%; height: 100%; }
.lit { fill: #c48c33; stroke: #9a7840; }
.shade { fill: #b6802e; stroke: none; }
.side { fill: #bc852f; stroke: none; }
.open { fill: #e4eceb; stroke: #a98445; stroke-width: .5; }
.edge { stroke: #8a6a38; stroke-width: .8; }
.cap-edge { stroke: #94703a; stroke-width: 6; }
.cap-edge use { stroke: #94703a; }
.cap { stroke: #bd8734; stroke-width: 5; }
.cap-edge use, .cap path { stroke-width: inherit; }
.cap-edge #caps, .cap #caps { stroke: inherit; }
.cursor { stroke: #222; }
.handle { position: absolute; background: #b1b6b5; }
.handle::after { content: ""; border: 0 dashed #c88b68; }
.top, .bottom { left: calc(50% - 17px); width: 32px; height: 16px; }
.top::after, .bottom::after { width: 26px; border-top-width: 1px; }
.left, .right { top: calc(50% - 16px); width: 15px; height: 32px; }
.left::after, .right::after { height: 26px; border-left-width: 1px; }
.top { top: 1px; border-radius: 0 0 3px 3px; }
.bottom { bottom: 0; border-radius: 3px 3px 0 0; }
.left { left: 1px; border-radius: 0 3px 3px 0; }
.right { right: 2px; border-radius: 3px 0 0 3px; }

.quickbar { flex: none; height: 20px; display: flex; background: #f1f1f1; }
.nav { width: 122px; flex: none; display: flex; align-items: center; }
.nav button { width: 23px; height: 20px; }
.nav .sep { width: 5px; height: 20px; }
.q { flex: 1; min-width: 0; border-left: 1px solid #bdbdbd; padding: 0 3px 0 4px; color: #333; }
.q span { flex: 1; min-width: 0; text-align: center; overflow: hidden; }
.q.dim { color: #aaa; }
.q.dim .p { color: #aaa; }
.q.dim .dark { stroke: #333; }

.navigator {
  width: 178px;
  flex: none;
  display: flex;
  flex-direction: column;
  padding-left: 2px;
  border-left: 1px solid #b8bcbc;
  overflow: hidden;
}
.navigator .hgrip { width: 70px; margin-bottom: 5px; }
.maps { flex: none; height: 28px; display: flex; align-items: center; }
.map { width: 30px; height: 28px; }
.maps .sep { width: 9px; height: 20px; margin-left: 3px; }
.menu { width: 32px; height: 22px; margin-left: auto; border: 1px solid #b8b8b8; border-right: 0; background: #e4e4e4; }
.menu svg { width: 30px; height: 12px; }
.search { flex: none; height: 23px; margin-top: 7px; display: flex; align-items: center; background: #fff; border: 1px solid #aaa; border-right: 0; }
.search input { flex: 1; min-width: 0; border: 0; padding: 0; outline: 0; background: none; font: inherit; color: #444; }
.search input::placeholder { color: #6c6c6c; opacity: 1; }
.treebox { flex: 1; min-height: 0; display: flex; background: #fff; }
.tree { flex: 1; min-width: 0; margin: 0; padding: 2px 0 11px; list-style: none; display: flex; flex-direction: column; overflow: hidden; }
.tree li { flex: 1; min-height: 0; display: flex; align-items: center; white-space: nowrap; color: #444; overflow: hidden; }
.tree .i { margin-right: 1px; }
.tree .v { width: 10px; height: 10px; margin-right: 2px; stroke: #888; }
.tree .open-v { stroke: #222; }
.l1 { padding-left: 3px; }
.l2 { padding-left: 26px; }
.l3 { padding-left: 36px; }
.l2:has(.v) { padding-left: 14px; }
.tree .sel { background: #d8d8d8; color: #000; font-weight: 600; }
.vscroll { flex: none; width: 14px; padding: 7px 0 4px; display: flex; flex-direction: column; align-items: center; background: #f0f0f0; }
.vscroll svg, .hscroll svg { width: 10px; height: 10px; stroke: #444; stroke-width: 1.600; }
.vthumb { flex: 1; width: 100%; margin: 106px 0 5px; background: #cbcbcb; }
.hscroll { flex: none; height: 17px; padding: 0 18px 0 1px; display: flex; align-items: center; justify-content: space-between; }
.hthumb { width: 74px; height: 16px; margin-right: auto; margin-left: 4px; background: #cbcbcb; }
.actions { flex: none; height: 35px; padding-left: 4px; display: flex; align-items: center; gap: 8px; }
.props { flex: none; height: 21px; justify-content: flex-start; gap: 7px; padding-left: 6px; background: #d5d5d5; }
.props .c { color: #333; }
.current { flex: none; height: 26px; display: flex; align-items: center; justify-content: space-between; padding: 2px 16px 0 2px; color: #333; }
.small { width: 15px; height: 15px; stroke-width: 1.500; }
.settings { flex: none; height: 22px; margin-bottom: 2px; background: #e3e3e3; border: 1px solid #bcbcbc; border-right: 0; color: #222; }

.status { flex: none; height: 23px; display: flex; align-items: center; justify-content: flex-end; border-top: 1px solid #d2d2d2; }
.windows { width: 26px; height: 22px; border-right: 1px solid #ddd; }
.brand { padding: 0 15px; font: 13px/20px Lato, sans-serif; color: #999; text-decoration: none; }
.brand b { font-weight: 700; }
.tail { width: 22px; height: 22px; border-left: 1px solid #ddd; }
```
